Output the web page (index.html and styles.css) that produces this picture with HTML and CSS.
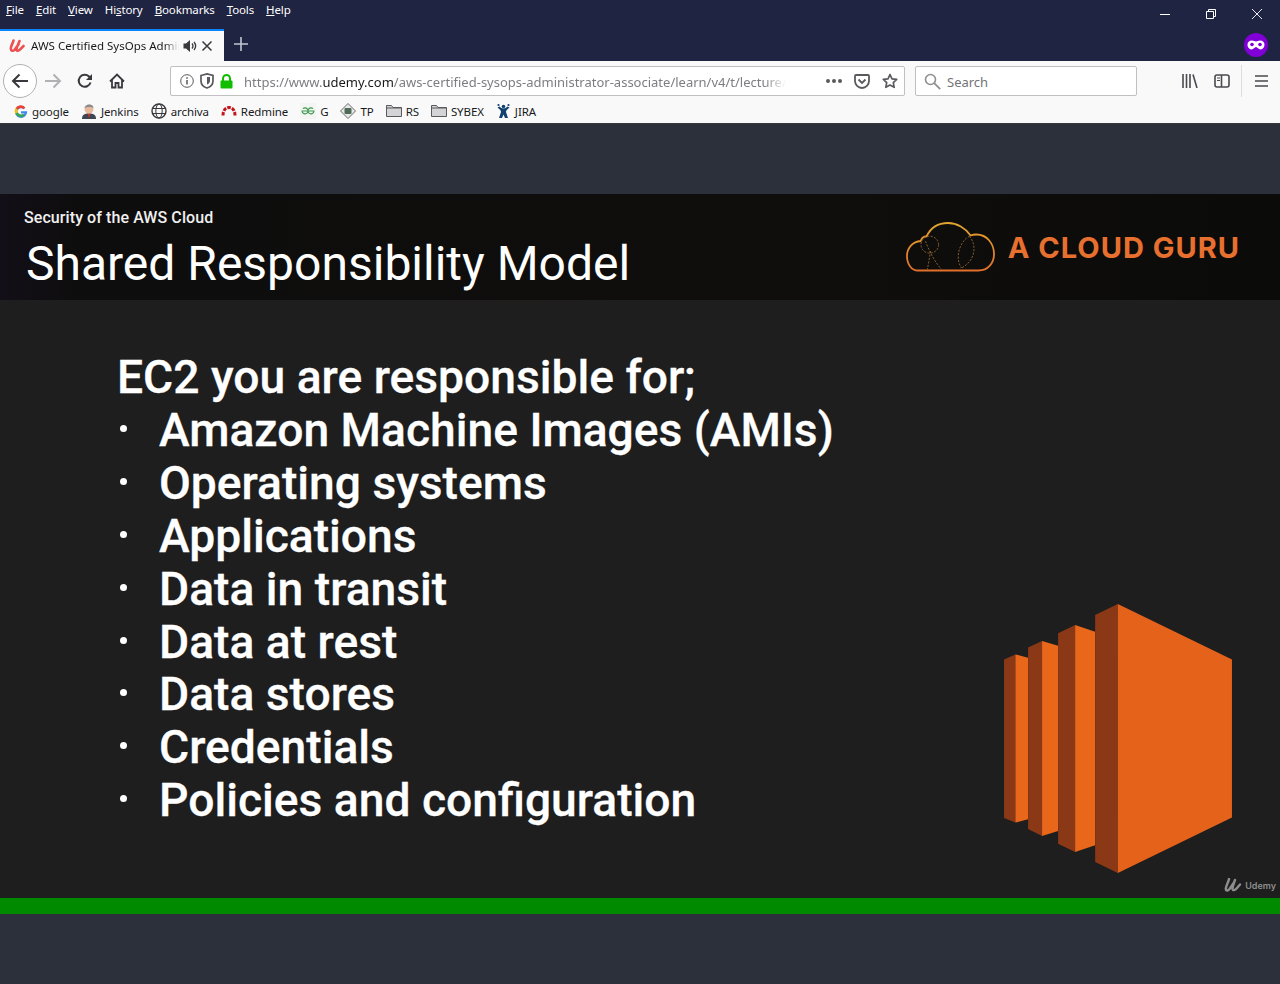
FILE: index.html
```html
<!DOCTYPE html>
<html lang="en">

    <head>
        <meta charset="UTF-8">
        <meta name="viewport" content="width=device-width, initial-scale=1.0">
        <title>AWS Certified SysOps Administrator</title>

        <link rel="stylesheet" href="styles.css">
    </head>

    <body>
        <header class="chrome">
            <div class="menubar">
                <nav class="menu">
                    <span><u>F</u>ile</span>
                    <span><u>E</u>dit</span>
                    <span><u>V</u>iew</span>
                    <span>Hi<u>s</u>tory</span>
                    <span><u>B</u>ookmarks</span>
                    <span><u>T</u>ools</span>
                    <span><u>H</u>elp</span>
                </nav>
                <div class="winctl">
                    <span class="winbtn"><svg width="12" height="12" viewBox="0 0 12 12"><path d="M1 6.5h10" stroke="#fff" fill="none"/></svg></span>
                    <span class="winbtn"><svg width="12" height="12" viewBox="0 0 12 12"><path d="M1.5 3.5h7v7h-7zM3.5 3.5v-2h7v7h-2" stroke="#fff" fill="none"/></svg></span>
                    <span class="winbtn"><svg width="12" height="12" viewBox="0 0 12 12"><path d="M1 1l10 10M11 1L1 11" stroke="#fff" stroke-width="0.9" fill="none"/></svg></span>
                </div>
            </div>
            <div class="tabbar">
                <div class="tab">
                    <svg class="favicon" width="16" height="16" viewBox="0 0 16 16"><path d="M4.500 2.500C4 5 1.800 8 1.800 10.500c0 2.500 2.200 2.800 3.700 1.300L9.500 6.500M10.500 3C9.500 6 7.500 9 7.500 11.500c0 2 2.500 1.500 4-.5l3-3" stroke="#ec5252" stroke-width="2.600" fill="none" stroke-linecap="round"/></svg>
                    <span class="tabtitle">AWS Certified SysOps Administrator</span>
                    <svg class="speaker" width="14" height="14" viewBox="0 0 14 14"><path d="M0.500 4.500h2.500L7 1v12L3 9.500H.5z" fill="#38383d"/><path d="M9 4.500c1.200 1.500 1.200 3.500 0 5M11 3c2 2.400 2 5.600 0 8" stroke="#38383d" stroke-width="1.300" fill="none"/></svg>
                    <svg class="tabclose" width="12" height="12" viewBox="0 0 12 12"><path d="M1.500 1.500l9 9M10.500 1.500l-9 9" stroke="#38383d" stroke-width="1.500" fill="none"/></svg>
                </div>
                <svg class="newtab" width="14" height="14" viewBox="0 0 14 14"><path d="M7 0v14M0 7h14" stroke="#c4c6d0" stroke-width="1.600" fill="none"/></svg>
                <span class="mask"><svg width="18" height="10" viewBox="0 0 18 10"><path d="M5 .5c1.600 0 2.800 1 4 1s2.400-1 4-1c2.800 0 4.500 1.800 4.500 4.300S15.800 9.500 13.500 9.500C11.300 9.500 10.500 7 9 7S6.700 9.500 4.500 9.500 .5 7.300 .5 4.800 2.200 .5 5 .5z" fill="#fff"/><circle cx="5" cy="4.500" r="1.800" fill="#8000d7"/><circle cx="13" cy="4.500" r="1.800" fill="#8000d7"/></svg></span>
            </div>
            <div class="navbar">
                <span class="backbtn"><svg width="18" height="16" viewBox="0 0 18 16"><path d="M17 8H2M8.500 1.500L2 8l6.500 6.500" stroke="#38383d" stroke-width="2" fill="none"/></svg></span>
                <span class="navbtn"><svg width="18" height="16" viewBox="0 0 18 16"><path d="M1 8h15M9.500 1.500L16 8l-6.500 6.500" stroke="#b1b1b3" stroke-width="2" fill="none"/></svg></span>
                <span class="navbtn"><svg width="16" height="16" viewBox="0 0 16 16"><path d="M13.500 9.500A6 6 0 1 1 12 3.500L14 5.500" stroke="#38383d" stroke-width="2" fill="none"/><path d="M15 1v6H9z" fill="#38383d"/></svg></span>
                <span class="navbtn"><svg width="16" height="16" viewBox="0 0 16 16"><path d="M1 8.500L8 1.500l7 7M3 7v7.500h3.500V10h3v4.500H13V7" stroke="#38383d" stroke-width="1.800" fill="none"/></svg></span>

                <div class="urlbar">
                    <svg class="urlicon" width="14" height="14" viewBox="0 0 14 14"><circle cx="7" cy="7" r="6.300" stroke="#5a5a5e" fill="none"/><path d="M7 6v4.500M7 3.200v1.600" stroke="#5a5a5e" stroke-width="1.500"/></svg>
                    <svg class="urlicon" width="14" height="16" viewBox="0 0 14 16"><path d="M1 2.500C3 2 5 1.500 7 1c2 .5 4 1 6 1.500V8c0 3.500-3 6-6 7-3-1-6-3.500-6-7z" stroke="#5a5a5e" stroke-width="1.700" fill="none"/><path d="M7 4h3v4c0 1.500-1.500 3-3 3.500z" fill="#5a5a5e"/></svg>
                    <svg class="urlicon" width="13" height="15" viewBox="0 0 13 15"><path d="M3 7V4.500a3.500 3.500 0 0 1 7 0V7" stroke="#12bc00" stroke-width="2" fill="none"/><rect x="0.500" y="6.500" width="12" height="8" rx="1" fill="#12bc00"/></svg>
                    <div class="urltext"><span class="dim">https://www.</span>udemy.com<span class="dim">/aws-certified-sysops-administrator-associate/learn/v4/t/lecture/</span></div>
                    <span class="dots"><i></i><i></i><i></i></span>
                    <svg class="pocket" width="16" height="15" viewBox="0 0 16 15"><path d="M2 1h12a1 1 0 0 1 1 1v5a7 7 0 0 1-14 0V2a1 1 0 0 1 1-1z" stroke="#5a5a5e" stroke-width="1.800" fill="none"/><path d="M4.500 5.500L8 9l3.500-3.500" stroke="#5a5a5e" stroke-width="1.800" fill="none"/></svg>
                    <svg class="star" width="16" height="16" viewBox="0 0 16 16"><path d="M8 1.500l2 4.300 4.700.6-3.400 3.200.9 4.700L8 12l-4.200 2.300.9-4.700L1.300 6.400 6 5.800z" stroke="#5a5a5e" stroke-width="1.700" stroke-linejoin="round" fill="none"/></svg>
                </div>

                <div class="searchbar">
                    <svg width="17" height="17" viewBox="0 0 17 17"><circle cx="6.500" cy="6.500" r="5" stroke="#8f8f92" stroke-width="1.600" fill="none"/><path d="M10.200 10.200l6 6" stroke="#8f8f92" stroke-width="1.800"/></svg>
                    <span class="searchtext">Search</span>
                </div>

                <div class="toolbtns">
                    <span class="toolbtn"><svg width="16" height="14" viewBox="0 0 16 14"><path d="M1 0v14M4.500 0v14M8 0v14M11 .5l4 13.500" stroke="#4a4a4f" stroke-width="1.600" fill="none"/></svg></span>
                    <span class="toolbtn"><svg width="16" height="14" viewBox="0 0 16 14"><rect x="1" y="1" width="14" height="12" rx="2" stroke="#4a4a4f" stroke-width="1.600" fill="none"/><path d="M7.500 1v12" stroke="#4a4a4f" stroke-width="1.600"/><path d="M3 4h3M3 6.500h3" stroke="#4a4a4f"/></svg></span>
                    <span class="toolsep"></span>
                    <span class="toolbtn"><svg width="13" height="12" viewBox="0 0 13 12"><path d="M0 1h13M0 6h13M0 11h13" stroke="#4a4a4f" stroke-width="1.700"/></svg></span>
                </div>
            </div>
            <div class="bookmarks">
                <span class="bm"><svg width="14" height="14" viewBox="0 0 16 16"><path d="M15 8.200H8v2.700h4a4.300 4.300 0 1 1-1.100-5l2-2A7 7 0 1 0 15 8.200z" fill="#4285f4"/><path d="M1.800 4.500l2.500 2A4.300 4.300 0 0 1 10.900 5.900l2-2A7 7 0 0 0 1.800 4.500z" fill="#ea4335"/><path d="M1.800 11.500l2.500-2a4.300 4.300 0 0 1 0-3l-2.500-2a7 7 0 0 0 0 7z" fill="#fbbc05"/><path d="M1.800 11.500a7 7 0 0 0 11 1.500l-2.300-1.800A4.300 4.300 0 0 1 4.300 9.500z" fill="#34a853"/></svg>google</span>
                <span class="bm"><svg width="16" height="16" viewBox="0 0 16 16"><path d="M1 16c0-4 2-5.500 7-5.500s7 1.500 7 5.500z" fill="#3d4652"/><path d="M6.500 10.500l1.500 5 1.500-5z" fill="#c9302c"/><circle cx="8" cy="6" r="4.500" fill="#e8b99a"/><path d="M3.500 5C4 1 12 0 12.500 5 10 4 6 3.500 3.500 5z" fill="#8a8d90"/></svg>Jenkins</span>
                <span class="bm"><svg width="16" height="16" viewBox="0 0 16 16"><circle cx="8" cy="8" r="7" stroke="#38383d" stroke-width="1.400" fill="none"/><ellipse cx="8" cy="8" rx="3.200" ry="7" stroke="#38383d" fill="none"/><path d="M1.200 5.500h13.600M1.200 10.500h13.600" stroke="#38383d"/></svg>archiva</span>
                <span class="bm"><svg width="16" height="16" viewBox="0 0 16 16"><path d="M2 12.500C2 7.500 4.500 4.500 8 4.500s6 3 6 8" stroke="#c3151a" stroke-width="3" stroke-dasharray="3.500 1.200" fill="none"/></svg>Redmine</span>
                <span class="bm"><svg width="16" height="16" viewBox="0 0 16 16"><rect width="16" height="16" fill="#f2f5f1"/><path d="M8 8H14a3 3 0 1 1-1-2.400M8 8H2a3 3 0 1 0 1-2.400" stroke="#3d9a4f" stroke-width="1.100" fill="none"/></svg>G</span>
                <span class="bm"><svg width="16" height="16" viewBox="0 0 16 16"><path d="M8 .5L15.500 8 8 15.500.5 8z" stroke="#6b6b6b" fill="#e8e8e8"/><rect x="4.500" y="5" width="7" height="6" rx="1" fill="#4f6b58"/></svg>TP</span>
                <span class="bm"><svg class="folder" width="16" height="14" viewBox="0 0 16 14"><path d="M.5 12.500v-11h5l1.500 2h8.500v9z" stroke="#5a5a5e" fill="#d4d4d6"/><path d="M.5 4h15" stroke="#5a5a5e"/></svg>RS</span>
                <span class="bm"><svg class="folder" width="16" height="14" viewBox="0 0 16 14"><path d="M.5 12.500v-11h5l1.500 2h8.500v9z" stroke="#5a5a5e" fill="#d4d4d6"/><path d="M.5 4h15" stroke="#5a5a5e"/></svg>SYBEX</span>
                <span class="bm"><svg width="15" height="16" viewBox="0 0 14 16"><circle cx="7" cy="3.500" r="1.800" fill="#13416f"/><circle cx="2" cy="2" r="1.100" fill="#13416f"/><circle cx="12" cy="2" r="1.100" fill="#13416f"/><path d="M1 4.500c2 2 3.500 2.500 3.500 4.500L2.500 15h3L7 11.500 8.500 15h3l-2-6c0-2 1.500-2.500 3.500-4.500l-2-1C9 6 5 6 3 3.500z" fill="#13416f"/></svg>JIRA</span>
            </div>
        </header>

        <main class="player">
            <section class="slide">
                <div class="slidehead">
                    <div>
                        <div class="kicker">Security of the AWS Cloud</div>
                        <h1 class="slidetitle">Shared Responsibility Model</h1>
                    </div>
                    <div class="guru">
                        <svg width="89" height="50" viewBox="0 0 91 50" preserveAspectRatio="none">
                            <defs>
                                <linearGradient id="cloudGrad" x1="0" y1="0" x2="0" y2="1">
                                    <stop offset="0" stop-color="#e0a52e"/>
                                    <stop offset="1" stop-color="#e2702c"/>
                                </linearGradient>
                            </defs>
                            <path d="M12 48.500H74C84 48.500 90 41 90 32C90 22 83 12.500 72 12.500C70 12.500 68 12.700 66 13.500C61 6 52 1 43 1C33 1 25 6 21 14.500C19 14 16 15.500 15 19C7 19.500 1 26 1 34C1 42.500 6 48.500 12 48.500Z" stroke="url(#cloudGrad)" stroke-width="1.800" fill="none"/>
                            <g stroke="#8a6034" stroke-width="1" stroke-dasharray="2 1.500" fill="none">
                                <ellipse cx="24.300" cy="22.700" rx="9" ry="8.500"/>
                                <path d="M20 19.300C24 30 30 41 36.700 47.700M25 29C24 36 23 42 21.700 47.700"/>
                                <path d="M65 14.300C56 18 49 35 56.700 46M65 14.300C72 22 72 38 56.700 46"/>
                            </g>
                        </svg>
                        <span class="gurutext">A CLOUD GURU</span>
                    </div>
                </div>
                <div class="slidebody">
                    <div class="points">
                        <p class="pointhead">EC2 you are responsible for;</p>
                        <ul class="pointlist">
                            <li>Amazon Machine Images (AMIs)</li>
                            <li>Operating systems</li>
                            <li>Applications</li>
                            <li>Data in transit</li>
                            <li>Data at rest</li>
                            <li>Data stores</li>
                            <li>Credentials</li>
                            <li>Policies and configuration</li>
                        </ul>
                    </div>
                    <svg class="ec2" width="228" height="269" viewBox="72 42 683 806">
                        <path d="M72 208L106 193V697L72 683Z" fill="#8a3815"/>
                        <path d="M106 193L144 203V687L106 697Z" fill="#e8671b"/>
                        <path d="M144 172L186 153V737L144 716Z" fill="#8a3815"/>
                        <path d="M186 153L234 167V722L186 737Z" fill="#e8671b"/>
                        <path d="M234 130L285 105V785L234 760Z" fill="#8a3815"/>
                        <path d="M285 105L345 125V765L285 785Z" fill="#e8671b"/>
                        <path d="M345 75L413 42V848L345 815Z" fill="#8a3815"/>
                        <path d="M413 42L755 208V682L413 848Z" fill="#e5621a"/>
                    </svg>
                </div>
                <div class="watermark">
                    <svg width="18" height="14" viewBox="0 0 18 14"><path d="M5 1C4.500 4 2 8 1.800 10.500c-.2 2.500 2 2.500 3.700 .5L10 4.500M11 2C10 5 8.500 8 8.500 10.500c0 2.500 2.500 2 4.500-.5l3-3.500" stroke="#8d8d8d" stroke-width="2.400" fill="none" stroke-linecap="round"/></svg>
                    <span>Udemy</span>
                </div>
            </section>
            <div class="progress"></div>
        </main>
    </body>

</html>
```

FILE: styles.css
```css
* {
    box-sizing: border-box;
}

html,
body {
    margin: 0;
    height: 100%;
    overflow: hidden;
}

body {
    font-family: "Noto Sans", "Open Sans", sans-serif;
    background-color: #2b303b;
}

/* browser chrome */
.chrome {
    height: 124px;
    background-color: #1f2442;
}

.menubar {
    height: 29px;
    display: flex;
    justify-content: space-between;
    color: #fff;
    font-size: 11.500px;
    letter-spacing: -0.12px;
}

.menu {
    display: flex;
    gap: 12px;
    padding: 2px 0 0 6px;
}

.winctl {
    display: flex;
}

.winbtn {
    width: 46px;
    height: 28px;
    display: flex;
    align-items: center;
    justify-content: center;
}

.tabbar {
    height: 32px;
    display: flex;
    align-items: center;
}

.tab {
    width: 224px;
    height: 32px;
    display: flex;
    align-items: center;
    background-color: #f9f9fa;
    border-top: 2px solid #0a84ff;
    padding: 0 0 1px 9px;
    font-size: 11.500px;
    color: #18191a;
}

.tabtitle {
    width: 148px;
    margin-left: 6px;
    white-space: nowrap;
    overflow: hidden;
    -webkit-mask-image: linear-gradient(to right, #000 90%, transparent);
    mask-image: linear-gradient(to right, #000 90%, transparent);
}

.speaker {
    margin-left: 4px;
}

.tabclose {
    margin-left: 4px;
}

.newtab {
    margin: 0 0 2px 10px;
}

.mask {
    width: 24px;
    height: 24px;
    margin: 0 12px 0 auto;
    border-radius: 50%;
    background-color: #8000d7;
    display: flex;
    align-items: center;
    justify-content: center;
}

.navbar {
    height: 40px;
    display: flex;
    align-items: center;
    background-color: #f9f9fa;
    padding-left: 3px;
}

.backbtn {
    width: 34px;
    height: 34px;
    border: 1px solid #b1b1b3;
    border-radius: 50%;
    background-color: #fff;
    display: flex;
    align-items: center;
    justify-content: center;
}

.navbtn {
    width: 32px;
    height: 32px;
    display: flex;
    align-items: center;
    justify-content: center;
}

.urlbar,
.searchbar {
    height: 30px;
    display: flex;
    align-items: center;
    background-color: #fff;
    border: 1px solid #c0c0c2;
    border-radius: 2px;
    font-size: 13px;
}

.urlbar {
    width: 735px;
    margin-left: 37px;
    padding-left: 9px;
}

.urlicon {
    margin-right: 6px;
    flex: none;
}

.urltext {
    width: 542px;
    margin-left: 5px;
    padding-top: 1px;
    color: #18191a;
    white-space: nowrap;
    overflow: hidden;
    -webkit-mask-image: linear-gradient(to right, #000 96%, transparent);
    mask-image: linear-gradient(to right, #000 96%, transparent);
}

.dim {
    color: #7d7d82;
}

.dots {
    display: flex;
    gap: 2px;
    margin-left: 40px;
}

.dots i {
    width: 4px;
    height: 4px;
    border-radius: 50%;
    background-color: #5a5a5e;
}

.pocket {
    margin-left: 12px;
}

.star {
    margin-left: 12px;
}

.searchbar {
    width: 222px;
    margin-left: 10px;
    padding-left: 8px;
    gap: 6px;
    color: #737377;
}

.searchtext {
    padding-top: 1px;
}

.toolbtns {
    display: flex;
    align-items: center;
    margin-left: 37px;
}

.toolbtn {
    width: 32px;
    height: 32px;
    display: flex;
    align-items: center;
    justify-content: center;
}

.toolsep {
    width: 1px;
    height: 32px;
    margin: 0 3px;
    background-color: #dcdcde;
}

.bookmarks {
    height: 23px;
    display: flex;
    align-items: center;
    gap: 12px;
    padding: 0 0 2px 14px;
    background-color: #f9f9fa;
    border-bottom: 1px solid #38383d;
    font-size: 11.500px;
    letter-spacing: -0.1px;
    color: #18191a;
}

.bm {
    display: flex;
    align-items: center;
    gap: 4px;
}

/* video area */
.player {
    padding-top: 70px;
}

.slide {
    position: relative;
    height: 704px;
    background-color: #1e1e1e;
    font-family: Roboto, sans-serif;
    color: #fff;
}

.slidehead {
    height: 106px;
    display: flex;
    justify-content: space-between;
    padding: 14px 40px 0 24px;
    background: linear-gradient(to right, #120f18, #0e0d0d 6%, #0f0e0d 60%, #0b0b0a);
}

.kicker {
    font-size: 16px;
    font-weight: 500;
    line-height: 19px;
    letter-spacing: 0.08px;
    color: #f0f0f0;
}

.slidetitle {
    margin: 8px 0 0 2px;
    font-size: 48px;
    font-weight: 400;
    line-height: 58px;
}

.guru {
    display: flex;
    align-items: center;
    gap: 13px;
    height: 78px;
}

.gurutext {
    font-family: Inter, sans-serif;
    font-size: 29px;
    font-weight: 700;
    letter-spacing: 1px;
    color: #e8702f;
}

.slidebody {
    height: 598px;
    display: flex;
    justify-content: space-between;
    padding: 51px 48px 0 117px;
}

.points {
    font-size: 46.200px;
    font-weight: 500;
    line-height: 52.900px;
    -webkit-text-stroke: 0.3px #fff;
}

.pointhead {
    margin: 0;
}

.pointlist {
    margin: 0;
    padding: 0;
    list-style: none;
}

.pointlist li {
    position: relative;
    padding-left: 42px;
}

.pointlist li::before {
    content: "";
    position: absolute;
    left: 3px;
    top: 21px;
    width: 7px;
    height: 7px;
    border-radius: 50%;
    background-color: #fff;
}

.ec2 {
    margin-top: 253px;
}

.watermark {
    position: absolute;
    right: 4px;
    bottom: 6px;
    display: flex;
    align-items: center;
    gap: 3px;
    font-family: Inter, sans-serif;
    font-size: 9px;
    font-weight: 600;
    color: #8d8d8d;
}

.progress {
    height: 16px;
    background-color: #008a00;
}
```
